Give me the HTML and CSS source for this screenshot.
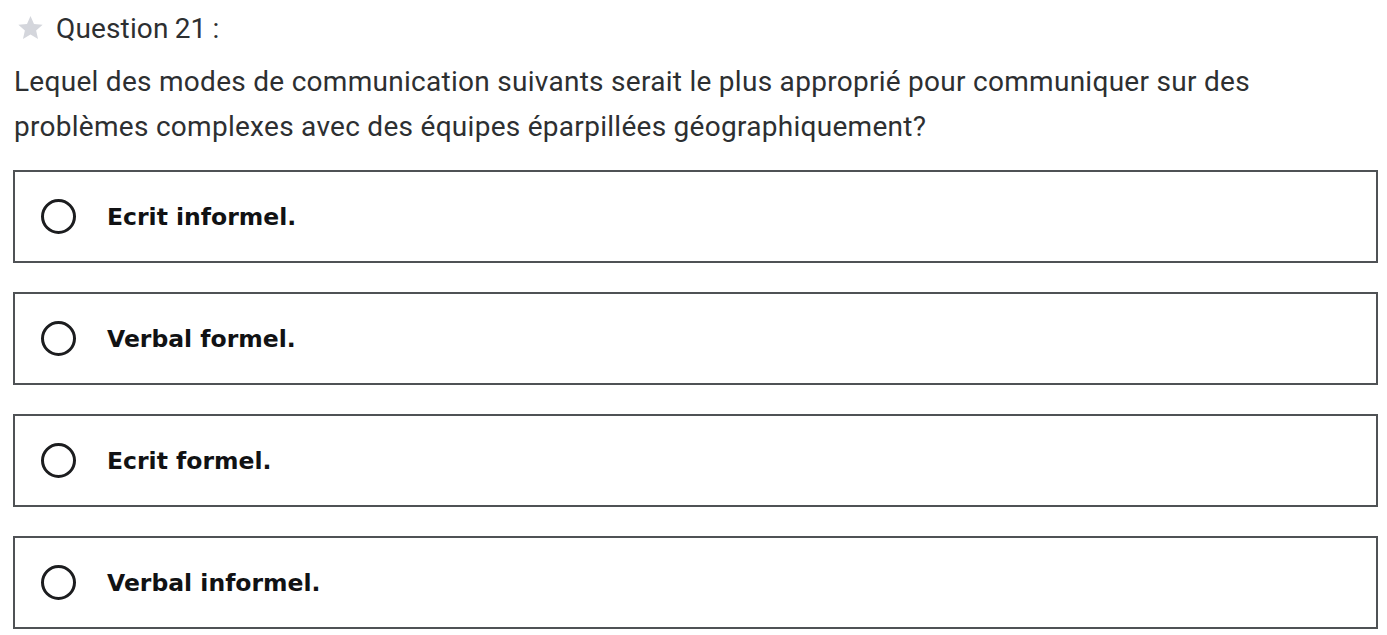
FILE: index.html
```html
<!DOCTYPE html>
<html lang="fr">
<head>
<meta charset="utf-8">
<link rel="stylesheet" href="styles.css">
</head>
<body>
<div class="page">
  <div class="qhead">
    <svg class="star" viewBox="0 0 24 24" width="27" height="27"><path d="M12 1.8l3.1 7.1 7.7.7-5.8 5.1 1.7 7.6L12 18.3l-6.7 4 1.7-7.6-5.8-5.1 7.7-.7z" fill="#d4d6dc"/></svg>
    <span class="qnum">Question 21 :</span>
  </div>
  <p class="prompt">Lequel des modes de communication suivants serait le plus approprié pour communiquer sur des problèmes complexes avec des équipes éparpillées géographiquement?</p>
  <div class="answers">
    <div class="answer"><span class="radio"></span><span class="label">Ecrit informel.</span></div>
    <div class="answer"><span class="radio"></span><span class="label">Verbal formel.</span></div>
    <div class="answer"><span class="radio"></span><span class="label">Ecrit formel.</span></div>
    <div class="answer"><span class="radio"></span><span class="label">Verbal informel.</span></div>
  </div>
</div>
</body>
</html>
```
FILE: styles.css
```css
html, body { margin: 0; padding: 0; background: #fff; }
body { font-family: Roboto, "Noto Sans", sans-serif; color: #2d2f31; }
.page { padding: 0 9px 0 13px; }
.qhead { display: flex; align-items: center; height: 56px; padding-left: 4px; }
.star { display: block; margin-right: 12px; margin-top: -1px; }
.qnum { font-size: 28px; color: #2d2f31; word-spacing: -1px; letter-spacing: 0.15px; }
.prompt { margin: 3px 0 0; padding-left: 1px; font-size: 28px; line-height: 45px; letter-spacing: 0.28px; width: 1290px; color: #2d2f31; }
.answers { display: flex; flex-direction: column; gap: 29px; margin-top: 21px; }
.answer { box-sizing: border-box; height: 93px; border: 2px solid #4f5255; display: flex; align-items: center; padding-left: 26px; }
.radio { box-sizing: border-box; width: 35px; height: 35px; border: 3px solid #1c1d1f; border-radius: 50%; flex: none; }
.label { margin-left: 31px; font-family: "DejaVu Sans", sans-serif; font-weight: 700; font-size: 23.5px; color: #111214; }
```
